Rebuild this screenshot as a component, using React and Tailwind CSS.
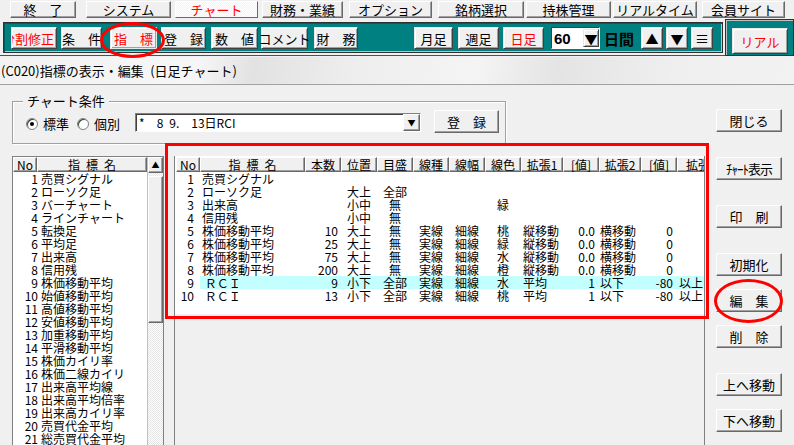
import React from 'react';

const raised =
  'bg-[#f0f0f0] border border-t-white border-l-white border-r-[#696969] border-b-[#696969] shadow-[inset_-1px_-1px_0_#a0a0a0]';
const tealBtn =
  'flex items-center justify-center whitespace-nowrap bg-[#f0f0f0] border border-t-[#e8e8e8] border-l-[#e8e8e8] border-r-[#404040] border-b-[#404040] shadow-[inset_1px_1px_0_#fff,inset_-1px_-1px_0_#a0a0a0] text-[13px] leading-none';

const tabs = [
  ['終　了', 'ml-[10px] w-[66px]', false],
  ['システム', 'ml-[10px] w-[85px]', false],
  ['チャート', 'ml-[4px] w-[83px]', true],
  ['財務・業績', 'ml-[4px] w-[81px]', false],
  ['オプション', 'ml-[6px] w-[83px]', false],
  ['銘柄選択', 'ml-[6px] w-[86px]', false],
  ['持株管理', 'ml-[2px] w-[85px]', false],
  ['リアルタイム', 'ml-[2px] w-[84px]', false],
  ['会員サイト', 'ml-[5px] w-[83px]', false],
];

const listItems = [
  '売買シグナル', 'ローソク足', 'バーチャート', 'ラインチャート', '転換足', '平均足', '出来高',
  '信用残', '株価移動平均', '始値移動平均', '高値移動平均', '安値移動平均', '加重移動平均',
  '平滑移動平均', '株価カイリ率', '株価二線カイリ', '出来高平均線', '出来高平均倍率',
  '出来高カイリ率', '売買代金平均', '総売買代金平均', '売買代金カイリ',
];

const cols = [
  ['No', 'w-[24px]', 'justify-end pr-[6px]'],
  ['指\u2002標\u2002名', 'w-[105px]', 'justify-start pl-[2px]'],
  ['本数', 'w-[36px]', 'justify-end pr-[3px]'],
  ['位置', 'w-[36px]', 'justify-center'],
  ['目盛', 'w-[36px]', 'justify-center'],
  ['線種', 'w-[36px]', 'justify-center'],
  ['線幅', 'w-[36px]', 'justify-center'],
  ['線色', 'w-[36px]', 'justify-center'],
  ['拡張1', 'w-[42px]', 'justify-start pl-[2px]'],
  ['[値]', 'w-[36px]', 'justify-end pr-[4px]'],
  ['拡張2', 'w-[42px]', 'justify-start pl-[1px]'],
  ['[値]', 'w-[36px]', 'justify-end pr-[4px]'],
  ['拡張', 'w-[42px]', 'justify-start pl-[2px]'],
];

const rows = [
  ['1', '売買シグナル', '', '', '', '', '', '', '', '', '', '', ''],
  ['2', 'ローソク足', '', '大上', '全部', '', '', '', '', '', '', '', ''],
  ['3', '出来高', '', '小中', '無', '', '', '緑', '', '', '', '', ''],
  ['4', '信用残', '', '小中', '無', '', '', '', '', '', '', '', ''],
  ['5', '株価移動平均', '10', '大上', '無', '実線', '細線', '桃', '縦移動', '0.0', '横移動', '0', ''],
  ['6', '株価移動平均', '25', '大上', '無', '実線', '細線', '緑', '縦移動', '0.0', '横移動', '0', ''],
  ['7', '株価移動平均', '75', '大上', '無', '実線', '細線', '水', '縦移動', '0.0', '横移動', '0', ''],
  ['8', '株価移動平均', '200', '大上', '無', '実線', '細線', '橙', '縦移動', '0.0', '横移動', '0', ''],
  ['9', ' ＲＣＩ', '9', '小下', '全部', '実線', '細線', '水', '平均', '1', '以下', '-80', '以上'],
  ['10', ' ＲＣＩ', '13', '小下', '全部', '実線', '細線', '桃', '平均', '1', '以下', '-80', '以上'],
];

function SideBtn({ children, className = '' }) {
  return (
    <div className={`flex h-[23px] w-[66px] items-center justify-center whitespace-nowrap text-[13px] leading-none ${raised} ${className}`}>
      {children}
    </div>
  );
}

function Radio({ on }) {
  return (
    <div className="flex h-[12px] w-[12px] items-center justify-center rounded-full border border-[#808080] bg-white shadow-[inset_1px_1px_0_#404040]">
      {on && <div className="h-[4px] w-[4px] rounded-full bg-black" />}
    </div>
  );
}

export default function App() {
  return (
    <div className="relative h-[445px] w-[794px] overflow-hidden bg-[#f0f0f0] font-['Noto_Sans_CJK_JP','Noto_Sans',sans-serif] text-black">
      {/* top tabs */}
      <div className="flex h-[19px] items-start">
        {tabs.map(([t, cls, sel]) => (
          <div
            key={t}
            className={`mt-[1px] flex h-[17px] items-center justify-center whitespace-nowrap border border-t-white border-l-white border-r-[#696969] border-b-[#696969] text-[13px] leading-none ${cls} ${
              sel
                ? 'bg-[repeating-conic-gradient(#f4f4f4_0_25%,#ffffff_0_50%)] bg-[length:2px_2px] text-[#ff0000]'
                : 'bg-[#f0f0f0] shadow-[inset_-1px_-1px_0_#a0a0a0]'
            }`}
          >
            {t}
          </div>
        ))}
      </div>

      {/* toolbar */}
      <div className="flex h-[36px] items-start">
        <div className="ml-[3px] mt-[3px] flex h-[31px] w-[720px] items-start border border-[#303030] bg-[#008080] pt-[4px] shadow-[inset_1px_1px_0_#006060,inset_-1px_-1px_0_#c0c0c0]">
          <div className={`${tealBtn} ml-[7px] h-[22px] w-[46px] justify-end overflow-hidden pr-[2px] text-[#ff0000]`}>
            <span>分割修正</span>
          </div>
          <div className={`${tealBtn} ml-[4px] h-[22px] w-[41px]`}>条　件</div>
          <div className={`${tealBtn} ml-[8px] h-[22px] w-[47px] border-t-[#404040] border-l-[#404040] border-r-[#e8e8e8] border-b-[#e8e8e8] text-[#ff0000] shadow-[inset_1px_1px_0_#808080]`}>指　標</div>
          <div className={`${tealBtn} ml-[4px] h-[22px] w-[45px]`}>登　録</div>
          <div className={`${tealBtn} ml-[5px] h-[22px] w-[47px]`}>数　値</div>
          <div className={`${tealBtn} ml-[3px] h-[22px] w-[47px] text-[10.5px]`}>コメント</div>
          <div className={`${tealBtn} ml-[6px] h-[22px] w-[44px]`}>財　務</div>
          <div className={`${tealBtn} ml-[56px] h-[22px] w-[39px]`}>月足</div>
          <div className={`${tealBtn} ml-[5px] h-[22px] w-[41px]`}>週足</div>
          <div className={`${tealBtn} ml-[4px] h-[22px] w-[41px] text-[#ff0000]`}>日足</div>
          <div className="ml-[7px] flex h-[22px] w-[49px] items-center border border-t-[#404040] border-l-[#404040] border-r-white border-b-white bg-white">
            <span className="flex-1 pl-[2px] font-['Liberation_Sans',sans-serif] text-[15px] font-bold leading-none">60</span>
            <div className={`${tealBtn} h-[18px] w-[16px] text-[8px]`}>▼</div>
          </div>
          <div className="ml-[4px] flex h-[22px] w-[32px] items-center text-[15px] font-bold leading-none">日間</div>
          <div className={`${tealBtn} ml-[5px] h-[22px] w-[22px] text-[10px]`}>▲</div>
          <div className={`${tealBtn} ml-[3px] h-[22px] w-[22px] text-[10px]`}>▼</div>
          <div className={`${tealBtn} ml-[3px] h-[22px] w-[22px] text-[14px]`}>≡</div>
        </div>
        <div className="ml-[2px] flex h-[37px] w-[69px] items-start border border-[#303030] bg-[#008080] pl-[6px] pt-[8px] shadow-[inset_1px_1px_0_#c0c0c0]">
          <div className={`${tealBtn} h-[26px] w-[56px] text-[#ff0000]`}>リアル</div>
        </div>
      </div>

      {/* title */}
      <div className="border-t border-[#505050] pt-[1px]">
        <div className="flex h-[28px] items-center whitespace-pre border-b border-[#a0a0a0] bg-[linear-gradient(100deg,#f2f2f2_0%,#f6f6f6_25%,#e2e2e2_32%,#eeeeee_45%,#f4f4f4_60%,#e4e4e4_70%,#efefef_85%,#f2f2f2_100%)] pl-[1px] text-[13px] leading-none">
          {'(C020)指標の表示・編集\u2002(日足チャート)'}
        </div>
      </div>

      {/* condition row */}
      <div className="flex h-[57px] items-start">
        <div className="relative ml-[12px] mt-[16px] flex h-[43px] w-[494px] items-start border border-[#a0a0a0] pt-[10px] shadow-[inset_1px_1px_0_#ffffff,1px_1px_0_#ffffff]">
          <div className="absolute -top-[9px] left-[10px] bg-[#f0f0f0] px-[4px] text-[13px] leading-[16px]">チャート条件</div>
          <div className="ml-[13px] mt-[5px] flex items-center">
            <Radio on />
            <span className="ml-[5px] text-[13px] leading-none">標準</span>
            <div className="ml-[8px]"><Radio /></div>
            <span className="ml-[5px] text-[13px] leading-none">個別</span>
          </div>
          <div className="ml-[15px] mt-[1px] flex h-[19px] w-[286px] items-center border border-t-[#808080] border-l-[#808080] border-r-white border-b-white bg-white shadow-[inset_1px_1px_0_#404040]">
            <span className="flex-1 whitespace-pre pl-[3px] text-[12px] leading-none">{'*\u2002\u20028\u20029.\u2002\u200213日RCI'}</span>
            <div className={`flex h-[17px] w-[17px] items-center justify-center text-[8px] ${raised}`}>▼</div>
          </div>
          <div className={`ml-[13px] -mt-[2px] flex h-[23px] w-[65px] items-center justify-center text-[13px] leading-none ${raised}`}>登　録</div>
        </div>
        <SideBtn className="ml-[210px] mt-[24px]">閉じる</SideBtn>
      </div>

      {/* main row */}
      <div className="flex">
        {/* left list */}
        <div className="ml-[12px] mt-[14px] flex h-[300px] w-[152px] border border-[#808080] bg-white">
          <div className="w-[134px]">
            <div className="flex h-[15px] whitespace-pre text-[12px] leading-none">
              <div className={`flex w-[24px] items-center justify-center ${raised}`}>No</div>
              <div className={`flex w-[110px] items-center justify-center ${raised}`}>{'指\u2002標\u2002名'}</div>
            </div>
            {listItems.map((t, i) => (
              <div key={t} className="flex h-[13px] items-center whitespace-nowrap text-[12px] leading-none">
                <span className="w-[25px] text-right">{i + 1}</span>
                <span className="ml-[3px]">{t}</span>
              </div>
            ))}
          </div>
          <div className="flex w-[16px] flex-col border-l border-[#c0c0c0] bg-[repeating-conic-gradient(#e4e4e4_0_25%,#ffffff_0_50%)] bg-[length:2px_2px]">
            <div className={`flex h-[16px] items-center justify-center text-[8px] leading-none ${raised}`}>▲</div>
            <div className={`mt-[3px] h-[147px] ${raised}`} />
          </div>
        </div>

        {/* table panel */}
        <div className="ml-[10px] mt-[14px] h-[300px] w-[531px] overflow-hidden border-x border-[#808080]">
          <div className="h-[158px] bg-white pl-[1px] pt-[1px]">
            <div className="flex h-[15px] whitespace-pre text-[12px] leading-none">
              {cols.map(([h, w], i) => (
                <div key={i} className={`flex shrink-0 items-center justify-center ${w} ${raised}`}>{h}</div>
              ))}
            </div>
            {rows.map((r, ri) => (
              <div key={ri} className="flex h-[13px] whitespace-nowrap text-[12px] leading-none">
                {r.map((v, ci) => (
                  <div
                    key={ci}
                    className={`flex shrink-0 items-center whitespace-pre ${cols[ci][1]} ${cols[ci][2]} ${
                      ri === 8 && ci > 0 ? 'bg-[#c4ffff]' : ''
                    }`}
                  >
                    {v}
                  </div>
                ))}
              </div>
            ))}
          </div>
        </div>

        {/* right buttons */}
        <div className="ml-[11px] mt-[15px] flex flex-col">
          <SideBtn className="text-[12px] tracking-[-1px]">ﾁｬｰﾄ表示</SideBtn>
          <SideBtn className="mt-[25px]">印　刷</SideBtn>
          <SideBtn className="mt-[25px]">初期化</SideBtn>
          <SideBtn className="mt-[13px]">編　集</SideBtn>
          <SideBtn className="mt-[13px]">削　除</SideBtn>
          <SideBtn className="mt-[25px]">上へ移動</SideBtn>
          <SideBtn className="mt-[13px]">下へ移動</SideBtn>
        </div>
      </div>

      {/* red annotations */}
      <div className="pointer-events-none absolute left-[165px] top-[143px] h-[176px] w-[544px] border-[3px] border-[#ff0000]" />
      <div className="pointer-events-none absolute left-[100px] top-[22px] h-[36px] w-[65px] rounded-[50%] border-[3px] border-[#ff0000]" />
      <div className="pointer-events-none absolute left-[714px] top-[279px] h-[44px] w-[69px] rounded-[50%] border-[3px] border-[#ff0000]" />
    </div>
  );
}
